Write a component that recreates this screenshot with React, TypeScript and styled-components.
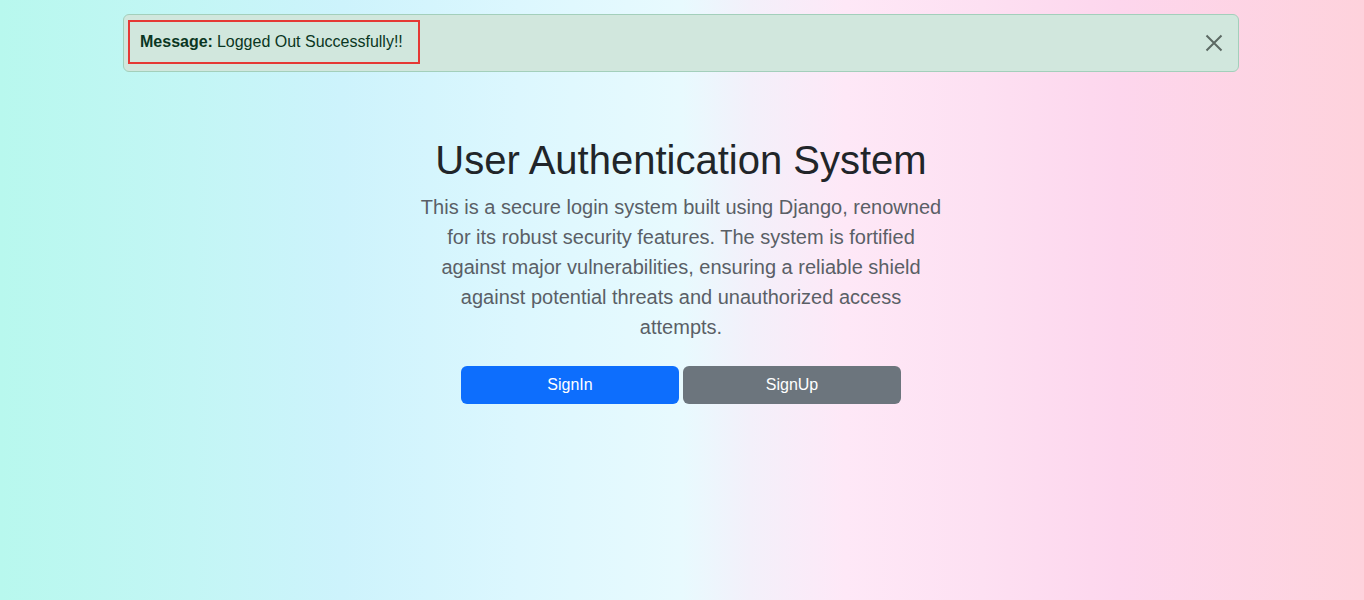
import React from 'react'
import styled, { createGlobalStyle } from 'styled-components'

const GlobalStyle = createGlobalStyle`
  html, body {
    margin: 0;
    padding: 0;
  }
  body {
    font-family: 'Liberation Sans', Arial, sans-serif;
    color: #212529;
    min-height: 600px;
    background: linear-gradient(90deg, #b8f8ee 0%, #c3f6f5 14%, #cdf3fc 25%, #dcf7fe 38%, #e8fafe 50%, #f3f0fa 55%, #fee8f7 62%, #fde0f2 72%, #fdd6ed 82%, #fed2dc 100%);
  }
`

const Container = styled.div`
  width: 1116px;
  margin: 0 auto;
  padding: 14px 2px 0 0;
`

const Alert = styled.div`
  display: flex;
  align-items: center;
  justify-content: space-between;
  height: 58px;
  box-sizing: border-box;
  padding: 5px 12px 8px 4px;
  background: #d1e7dd;
  border: 1px solid #a3cfbb;
  border-radius: 6px;
  color: #0a3622;
`

const MessageBox = styled.div`
  height: 44px;
  box-sizing: border-box;
  display: flex;
  align-items: center;
  padding: 0 15px 0 10px;
  border: 2px solid #e53935;
  font-size: 16px;
  b {
    font-weight: 700;
    margin-right: 4px;
  }
`

const CloseButton = styled.button`
  border: none;
  background: none;
  padding: 0;
  width: 24px;
  height: 24px;
  display: flex;
  align-items: center;
  justify-content: center;
  color: #5c6963;
  cursor: pointer;
  margin-top: 3px;
`

const Hero = styled.section`
  width: 524px;
  margin: 64px auto 0;
  text-align: center;
`

const Title = styled.h1`
  margin: 0;
  font-size: 40px;
  font-weight: 500;
  line-height: 48px;
  color: #212529;
`

const Lead = styled.p`
  margin: 8px 0 24px;
  font-size: 20px;
  line-height: 30px;
  color: #5a5f66;
`

const ButtonRow = styled.div`
  display: flex;
  justify-content: center;
  gap: 4px;
`

const Button = styled.button<{ $variant: 'primary' | 'secondary' }>`
  width: 218px;
  height: 38px;
  border: none;
  border-radius: 6px;
  font-family: inherit;
  font-size: 16px;
  color: #fff;
  background: ${p => (p.$variant === 'primary' ? '#0d6efd' : '#6c757d')};
  cursor: pointer;
`

export default function App() {
  return (
    <>
      <GlobalStyle />
      <Container>
        <Alert>
          <MessageBox>
            <b>Message:</b> Logged Out Successfully!!
          </MessageBox>
          <CloseButton aria-label="Close">
            <svg width="18" height="18" viewBox="0 0 18 18">
              <path d="M1.5 1.5 L16.5 16.5 M16.5 1.5 L1.5 16.5" stroke="currentColor" strokeWidth="2" fill="none" />
            </svg>
          </CloseButton>
        </Alert>
        <Hero>
          <Title>User Authentication System</Title>
          <Lead>
            This is a secure login system built using Django, renowned for its robust security features. The system is
            fortified against major vulnerabilities, ensuring a reliable shield against potential threats and
            unauthorized access attempts.
          </Lead>
          <ButtonRow>
            <Button $variant="primary">SignIn</Button>
            <Button $variant="secondary">SignUp</Button>
          </ButtonRow>
        </Hero>
      </Container>
    </>
  )
}
